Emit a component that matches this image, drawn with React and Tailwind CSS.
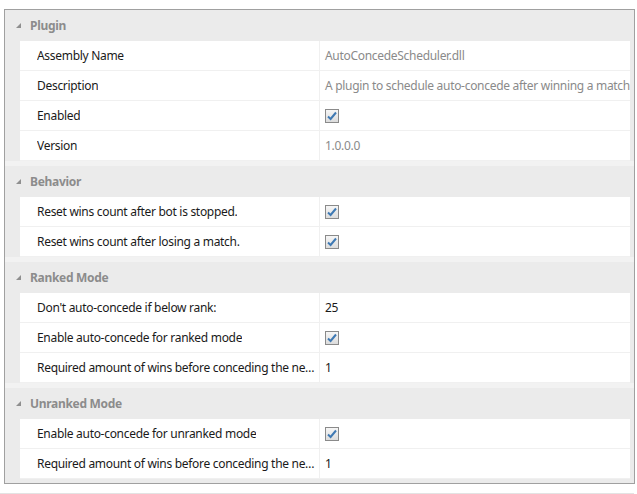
const sections = [
  {
    title: "Plugin",
    rows: [
      { name: "Assembly Name", value: "AutoConcedeScheduler.dll", readOnly: true },
      { name: "Description", value: "A plugin to schedule auto-concede after winning a match", readOnly: true },
      { name: "Enabled", check: true },
      { name: "Version", value: "1.0.0.0", readOnly: true },
    ],
  },
  {
    title: "Behavior",
    rows: [
      { name: "Reset wins count after bot is stopped.", check: true },
      { name: "Reset wins count after losing a match.", check: true },
    ],
  },
  {
    title: "Ranked Mode",
    rows: [
      { name: "Don't auto-concede if below rank:", value: "25" },
      { name: "Enable auto-concede for ranked mode", check: true },
      { name: "Required amount of wins before conceding the next match", value: "1" },
    ],
  },
  {
    title: "Unranked Mode",
    rows: [
      { name: "Enable auto-concede for unranked mode", check: true },
      { name: "Required amount of wins before conceding the next match", value: "1" },
    ],
  },
];

const CheckBox = () => (
  <div className="w-[14px] h-[14px] border border-[#8a8a8a] bg-gradient-to-b from-[#f6f6f6] to-[#dcdcdc] flex items-center justify-center">
    <svg width="12" height="12" viewBox="0 0 12 12">
      <path d="M2 6.5 L4.6 9 L10 2.5" fill="none" stroke="#3f79b3" strokeWidth="2" />
    </svg>
  </div>
);

const Section = ({ section, first }) => (
  <div>
    {!first && <div className="h-[5px] bg-[#f2f2f2]" />}
    <div className="h-[31px] flex items-center pl-[11px]">
      <svg width="5" height="5" viewBox="0 0 5 5" className="mr-[9px]">
        <polygon points="5,0 5,5 0,5" fill="#8f8f8f" />
      </svg>
      <span className="font-bold text-[#8c8c8c]">{section.title}</span>
    </div>
    <div className="ml-[15px] mr-[4px] bg-white">
      {section.rows.map((row, i) => (
        <div key={i} className="h-[30px] flex border-b border-[#f0f0f0]">
          <div className="w-[300px] shrink-0 border-r border-[#f0f0f0] pl-[17px] pr-[3px] flex items-center overflow-hidden">
            <span className="block min-w-0 truncate text-[#1a1a1a]">{row.name}</span>
          </div>
          <div className="flex-1 min-w-0 pl-[5px] flex items-center overflow-hidden whitespace-nowrap">
            {row.check ? (
              <CheckBox />
            ) : (
              <span className={row.readOnly ? "text-[#8a8a8a]" : "text-[#1a1a1a]"}>{row.value}</span>
            )}
          </div>
        </div>
      ))}
    </div>
  </div>
);

export default function App() {
  return (
    <div
      className="w-[637px] h-[494px] bg-white overflow-hidden text-[12px] tracking-[-0.3px]"
      style={{ fontFamily: '"Noto Sans", "Open Sans", sans-serif' }}
    >
      <div className="h-[9px]" />
      <div className="ml-[4px] w-[631px] h-[475px] border border-[#a0a0a0] bg-[#ebebeb] overflow-hidden">
        {sections.map((s, i) => (
          <Section key={s.title} section={s} first={i === 0} />
        ))}
      </div>
      <div className="h-[9px]" />
      <div className="h-px w-[634px] bg-[#e3e3e3]" />
    </div>
  );
}
